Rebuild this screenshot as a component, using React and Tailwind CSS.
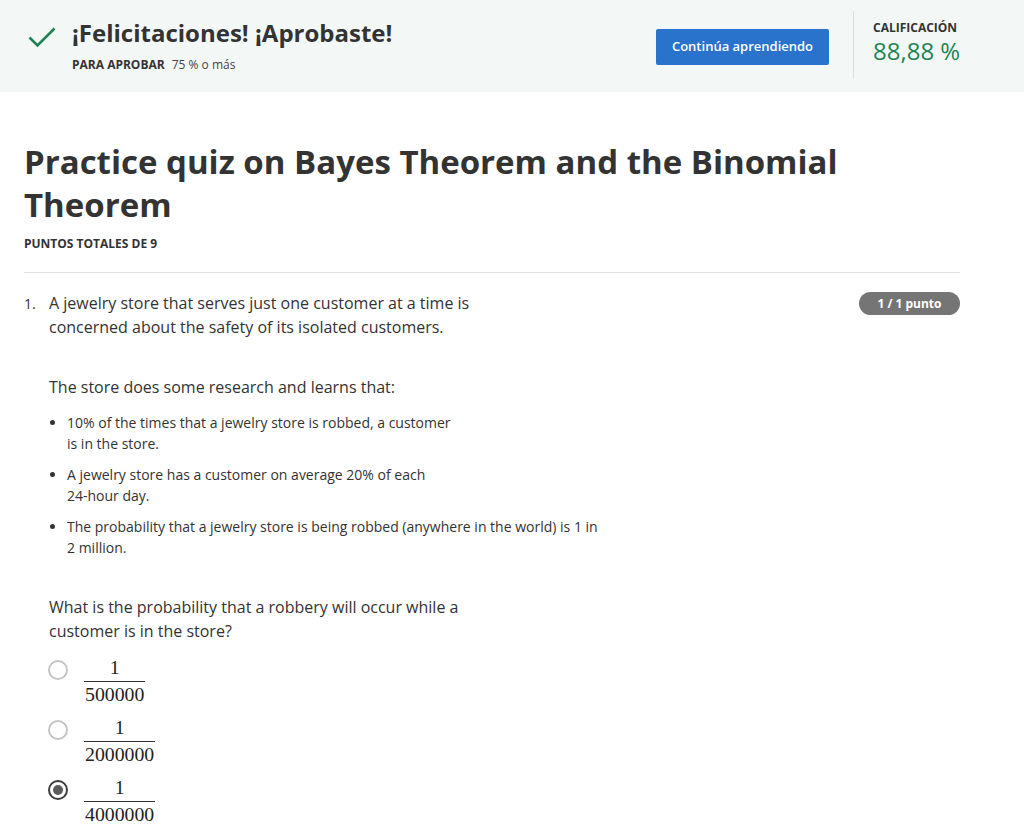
import React from "react";

const font = { fontFamily: '"Open Sans", "Noto Sans", sans-serif' };

const CheckIcon = () => (
  <svg width="28" height="21" viewBox="0 0 28 21" fill="none">
    <path d="M1.5 10.5 L9.5 18.5 L26.5 1.5" stroke="#1f8354" strokeWidth="2.6" />
  </svg>
);

const Radio = ({ checked }) =>
  checked ? (
    <span className="mt-[2.5px] flex h-5 w-5 shrink-0 items-center justify-center rounded-full border-2 border-[#3c3c3c]">
      <span className="h-[10px] w-[10px] rounded-full bg-[#5b5b5b]" />
    </span>
  ) : (
    <span className="mt-[2.5px] h-5 w-5 shrink-0 rounded-full border-2 border-[#c4c4c4]" />
  );

const Fraction = ({ den }) => (
  <span className="inline-flex flex-col items-center text-[19.8px] leading-[20px] text-[#222]" style={{ fontFamily: '"Liberation Serif", "DejaVu Serif", serif' }}>
    <span className="w-full border-b border-[#333] pb-[3.5px] text-center">1</span>
    <span className="px-[1px] pt-[2.5px]">{den}</span>
  </span>
);

const options = [
  { den: "500000", checked: false },
  { den: "2000000", checked: false },
  { den: "4000000", checked: true },
];

export default function App() {
  return (
    <div className="min-h-screen bg-white text-[#333]" style={font}>
      {/* Result banner */}
      <div className="h-[92px] bg-[#f3f8f7]">
        <div className="ml-[28px] flex w-[932px] items-start justify-between">
          <div className="flex items-start gap-[16px] pt-[17px]">
            <div className="pt-[10px]">
              <CheckIcon />
            </div>
            <div>
              <div className="text-[24px] font-bold leading-[32px] text-[#333]">
                ¡Felicitaciones! ¡Aprobaste!
              </div>
              <div className="mt-[8px] flex gap-[7px] text-[12px] leading-[16px]">
                <span className="font-bold text-[#333]">PARA APROBAR</span>
                <span className="text-[#444]">75 % o más</span>
              </div>
            </div>
          </div>
          <div className="flex items-start">
            <button className="mt-[29px] h-[36px] w-[173px] rounded-[2px] bg-[#2a73cc] text-[13px] font-semibold text-white">
              Continúa aprendiendo
            </button>
            <div className="ml-[24px] mt-[11px] h-[68px] w-px bg-[#dcdfde]" />
            <div className="w-[106px] whitespace-nowrap pl-[19px] pt-[20px]">
              <div className="text-[12px] font-bold leading-[16px] text-[#333]">CALIFICACIÓN</div>
              <div className="mt-[2px] text-[24px] leading-[26px] text-[#1f8354]">88,88 %</div>
            </div>
          </div>
        </div>
      </div>

      {/* Quiz body */}
      <div className="ml-[24px] w-[936px]">
        <h1 className="mt-[48px] text-[33px] font-bold leading-[43px] text-[#333]">
          Practice quiz on Bayes Theorem and the Binomial
          <br />
          Theorem
        </h1>
        <div className="mt-[10px] text-[12px] font-bold leading-[16px] text-[#333]">
          PUNTOS TOTALES DE 9
        </div>
        <div className="mt-[20px] h-px bg-[#e1e1e1]" />

        <div className="flex items-start pt-[18px]">
          <div className="w-[25px] pt-[2px] text-[14px] leading-[21px] text-[#333]">1.</div>
          <div className="flex-1">
            <p className="text-[16px] leading-[24px] text-[#333]">
              A jewelry store that serves just one customer at a time is
              <br />
              concerned about the safety of its isolated customers.
            </p>
            <p className="mt-[36px] text-[16px] leading-[24px] text-[#333]">
              The store does some research and learns that:
            </p>
            <ul className="mt-[13px] flex flex-col gap-[10px] pl-[18px] text-[14px] leading-[21px] text-[#333]">
              <li className="list-disc marker:text-[#333]">
                10% of the times that a jewelry store is robbed, a customer
                <br />
                is in the store.
              </li>
              <li className="list-disc marker:text-[#333]">
                A jewelry store has a customer on average 20% of each
                <br />
                24-hour day.
              </li>
              <li className="list-disc marker:text-[#333]">
                The probability that a jewelry store is being robbed (anywhere in the world) is 1 in
                <br />
                2 million.
              </li>
            </ul>
            <p className="mt-[37px] text-[16px] leading-[24px] text-[#333]">
              What is the probability that a robbery will occur while a
              <br />
              customer is in the store?
            </p>
            <div className="mt-[14px] flex flex-col gap-[13px]">
              {options.map((o) => (
                <div key={o.den} className="-ml-px flex items-start gap-[16px]">
                  <Radio checked={o.checked} />
                  <Fraction den={o.den} />
                </div>
              ))}
            </div>
          </div>
          <span className="mt-[1px] flex h-[23px] w-[101px] items-center justify-center rounded-full bg-[#757575] text-[12px] font-bold text-white">
            1 / 1 punto
          </span>
        </div>
      </div>
    </div>
  );
}
